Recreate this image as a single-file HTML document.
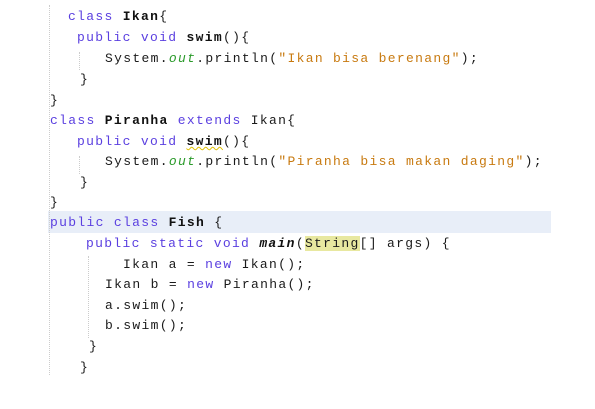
<!DOCTYPE html>
<html><head><style>
body{margin:0;width:595px;height:409px;background:#fff;position:relative;overflow:hidden;font-family:"Liberation Mono",monospace;font-size:13px;color:#1a1a1a;}
.l{position:absolute;white-space:pre;letter-spacing:1.32px;line-height:20px;}
.k{color:#5a3fe0}
.s{color:#c87a10}
.o{color:#2a9a2a;font-style:italic}
b{font-weight:bold;color:#111}
.hl{position:absolute;left:48px;top:211px;width:503px;height:22px;background:#e8eef8}
.g{position:absolute;border-left:1px dotted #ccc}
.sq{text-decoration:underline wavy #e0c000;text-decoration-thickness:1px}
</style></head><body>
<div class="hl"></div>
<div class="g" style="left:49px;top:5px;height:370px"></div>
<div class="g" style="left:79px;top:52px;height:18px"></div>
<div class="g" style="left:79px;top:156px;height:18px"></div>
<div class="g" style="left:88px;top:256px;height:82px"></div>
<div class="l" style="left:68px;top:7px"><span class="k">class</span> <b>Ikan</b>{</div>
<div class="l" style="left:77px;top:28px"><span class="k">public void</span> <b>swim</b>(){</div>
<div class="l" style="left:105px;top:49px">System.<span class="o">out</span>.println(<span class="s">"Ikan bisa berenang"</span>);</div>
<div class="l" style="left:80px;top:70px">}</div>
<div class="l" style="left:50px;top:91px">}</div>
<div class="l" style="left:50px;top:111px"><span class="k">class</span> <b>Piranha</b> <span class="k">extends</span> Ikan{</div>
<div class="l" style="left:77px;top:132px"><span class="k">public void</span> <b class="sq">swim</b>(){</div>
<div class="l" style="left:105px;top:152px">System.<span class="o">out</span>.println(<span class="s">"Piranha bisa makan daging"</span>);</div>
<div class="l" style="left:80px;top:173px">}</div>
<div class="l" style="left:50px;top:193px">}</div>
<div class="l" style="left:50px;top:213px"><span class="k">public class</span> <b>Fish</b> {</div>
<div class="l" style="left:86px;top:234px"><span class="k">public static void</span> <b><i>main</i></b>(<span style="background:#e8e8a0">String</span>[] args) {</div>
<div class="l" style="left:123px;top:255px">Ikan a = <span class="k">new</span> Ikan();</div>
<div class="l" style="left:105px;top:275px">Ikan b = <span class="k">new</span> Piranha();</div>
<div class="l" style="left:105px;top:296px">a.swim();</div>
<div class="l" style="left:105px;top:316px">b.swim();</div>
<div class="l" style="left:89px;top:337px">}</div>
<div class="l" style="left:80px;top:358px">}</div>
</body></html>
